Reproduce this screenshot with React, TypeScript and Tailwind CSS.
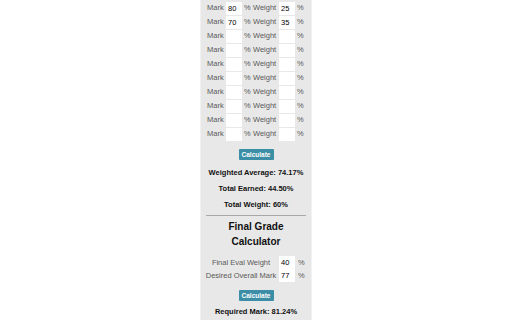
import React from 'react';

const rows: { mark: string; weight: string }[] = [
  { mark: '80', weight: '25' },
  { mark: '70', weight: '35' },
  ...Array.from({ length: 8 }, () => ({ mark: '', weight: '' })),
];

const Box: React.FC<{ value: string }> = ({ value }) => (
  <div className="w-[16px] h-[13px] bg-white text-black text-[7.5px] leading-[13px] pl-[2px] overflow-hidden">
    {value}
  </div>
);

const CalcButton: React.FC = () => (
  <div className="flex justify-center">
    <div className="w-[35px] h-[11px] bg-[#3b8ea5] text-white text-[6.5px] leading-[11px] text-center font-bold rounded-[1px]">
      Calculate
    </div>
  </div>
);

const App: React.FC = () => {
  return (
    <div className="w-[512px] h-[320px] bg-white overflow-hidden flex justify-center font-['Liberation_Sans',Arial,sans-serif]">
      <div className="w-[112px] h-[320px] bg-[#e8e8e8] border-x border-[#f2f2f2] pt-[1px] flex flex-col">
        {rows.map((r, i) => (
          <div key={i} className="h-[14px] pl-[6px] flex items-center text-[7.5px] text-[#5a5a5a]">
            <span className="w-[17px]">Mark</span>
            <div className="ml-[2px]">
              <Box value={r.mark} />
            </div>
            <span className="ml-[2px] w-[7px]">%</span>
            <span className="ml-[2px] w-[24px]">Weight</span>
            <div className="ml-[2px]">
              <Box value={r.weight} />
            </div>
            <span className="ml-[2px]">%</span>
          </div>
        ))}

        <div className="mt-[8px]">
          <CalcButton />
        </div>

        <div className="mt-[8px] flex flex-col items-center text-[7.5px] font-bold text-[#111] leading-[10px] gap-[6px]">
          <div>Weighted Average: 74.17%</div>
          <div>Total Earned: 44.50%</div>
          <div>Total Weight: 60%</div>
        </div>

        <div className="mt-[5px] mx-[5px] h-[1px] bg-[#a8a8a8]" />

        <div className="mt-[3px] text-center text-[10px] font-bold text-[#111] leading-[15px]">
          <div>Final Grade</div>
          <div>Calculator</div>
        </div>

        <div className="mt-[7px] flex flex-col text-[7.5px] text-[#5a5a5a]">
          {[
            { label: 'Final Eval Weight', value: '40' },
            { label: 'Desired Overall Mark', value: '77' },
          ].map((f) => (
            <div key={f.label} className="h-[13px] pl-[3px] flex items-center">
              <span className="w-[74px] text-center">{f.label}</span>
              <div className="ml-[1px]">
                <Box value={f.value} />
              </div>
              <span className="ml-[3px]">%</span>
            </div>
          ))}
        </div>

        <div className="mt-[8px]">
          <CalcButton />
        </div>

        <div className="mt-[6px] text-center text-[7.5px] font-bold text-[#111] leading-[10px]">
          Required Mark: 81.24%
        </div>
      </div>
    </div>
  );
};

export default App;
